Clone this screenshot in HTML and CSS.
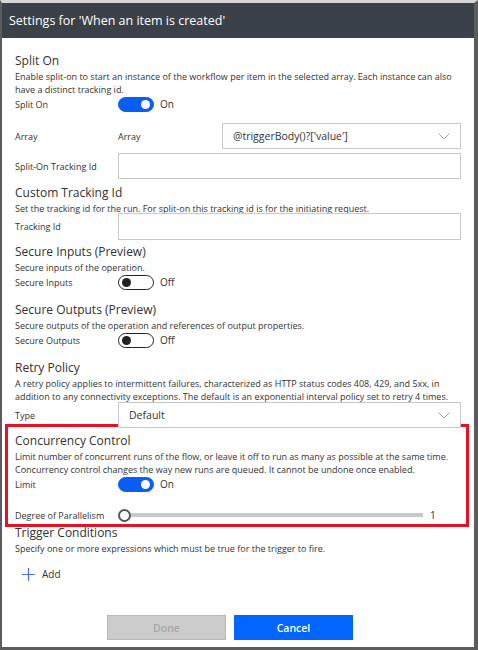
FILE: index.html
```html
<!DOCTYPE html>
<html lang="en">
<head>
  <meta charset="UTF-8" />
  <title>Settings</title>
  <link rel="stylesheet" href="styles.css">
</head>
<body>

  <div class="dialog">
    <div class="dialog-header">Settings for 'When an item is created'</div>

    <div class="dialog-body">
      <!-- Split On -->
      <section class="setting">
        <h3>Split On</h3>
        <p class="desc">Enable split-on to start an instance of the workflow per item in the selected array. Each instance can also have a distinct tracking id.</p>
        <div class="row row-toggle">
          <label>Split On</label>
          <div class="toggle-wrap">
            <span class="toggle on"><span class="knob"></span></span>
            <span class="toggle-text">On</span>
          </div>
        </div>
        <div class="row row-array">
          <label>Array</label>
          <span class="sub-label">Array</span>
          <div class="select">
            <span>@triggerBody()?['value']</span>
            <svg class="chevron" width="12" height="7" viewBox="0 0 12 7"><path d="M0.5 0.5 L6 6 L11.5 0.5" fill="none" stroke="#a6a6a6" stroke-width="1"/></svg>
          </div>
        </div>
        <div class="row row-input">
          <label>Split-On Tracking Id</label>
          <div class="input"></div>
        </div>
      </section>

      <!-- Custom Tracking Id -->
      <section class="setting">
        <h3>Custom Tracking Id</h3>
        <p class="desc">Set the tracking id for the run. For split-on this tracking id is for the initiating request.</p>
        <div class="row row-input row-tight">
          <label>Tracking Id</label>
          <div class="input"></div>
        </div>
      </section>

      <!-- Secure Inputs -->
      <section class="setting">
        <h3>Secure Inputs (Preview)</h3>
        <p class="desc">Secure inputs of the operation.</p>
        <div class="row row-toggle">
          <label>Secure Inputs</label>
          <div class="toggle-wrap">
            <span class="toggle"><span class="knob"></span></span>
            <span class="toggle-text">Off</span>
          </div>
        </div>
      </section>

      <!-- Secure Outputs -->
      <section class="setting">
        <h3>Secure Outputs (Preview)</h3>
        <p class="desc">Secure outputs of the operation and references of output properties.</p>
        <div class="row row-toggle">
          <label>Secure Outputs</label>
          <div class="toggle-wrap">
            <span class="toggle"><span class="knob"></span></span>
            <span class="toggle-text">Off</span>
          </div>
        </div>
      </section>

      <!-- Retry Policy -->
      <section class="setting">
        <h3>Retry Policy</h3>
        <p class="desc">A retry policy applies to intermittent failures, characterized as HTTP status codes 408, 429, and 5xx, in addition to any connectivity exceptions. The default is an exponential interval policy set to retry 4 times.</p>
        <div class="row row-type">
          <label>Type</label>
          <div class="select">
            <span>Default</span>
            <svg class="chevron" width="12" height="7" viewBox="0 0 12 7"><path d="M0.5 0.5 L6 6 L11.5 0.5" fill="none" stroke="#a6a6a6" stroke-width="1"/></svg>
          </div>
        </div>
      </section>

      <!-- Concurrency Control (highlighted) -->
      <section class="setting highlight">
        <h3>Concurrency Control</h3>
        <p class="desc">Limit number of concurrent runs of the flow, or leave it off to run as many as possible at the same time. Concurrency control changes the way new runs are queued. It cannot be undone once enabled.</p>
        <div class="row row-toggle">
          <label>Limit</label>
          <div class="toggle-wrap">
            <span class="toggle on"><span class="knob"></span></span>
            <span class="toggle-text">On</span>
          </div>
        </div>
        <div class="row row-slider">
          <label>Degree of Parallelism</label>
          <div class="slider">
            <span class="thumb"></span>
            <span class="track"></span>
            <span class="slider-value">1</span>
          </div>
        </div>
      </section>

      <!-- Trigger Conditions -->
      <section class="setting">
        <h3>Trigger Conditions</h3>
        <p class="desc">Specify one or more expressions which must be true for the trigger to fire.</p>
        <div class="add-link">
          <svg width="13" height="13" viewBox="0 0 13 13"><path d="M6.5 0 V13 M0 6.5 H13" stroke="#4f6bed" stroke-width="1.2"/></svg>
          <span>Add</span>
        </div>
      </section>
    </div>

    <div class="dialog-footer">
      <button class="btn btn-done" disabled>Done</button>
      <button class="btn btn-cancel">Cancel</button>
    </div>
  </div>

</body>
</html>
```

FILE: styles.css
```css
/* Page */
body {
  margin: 0;
  padding: 0;
  background: #fff;
  font-family: "Open Sans", "Noto Sans", sans-serif;
  color: #333;
}

/* Dialog frame */
.dialog {
  width: 478px;
  height: 650px;
  box-sizing: border-box;
  border-top: 3px solid #d6d6d6;
  border-left: 2px solid #5c5c5c;
  border-right: 4px solid #5c5c5c;
  border-bottom: 3px solid #5c5c5c;
  display: flex;
  flex-direction: column;
  background: #fff;
}

.dialog-header {
  height: 35px;
  background: #3b4148;
  color: #fff;
  font-size: 12.5px;
  line-height: 35px;
  padding-left: 7px;
  flex-shrink: 0;
}

.dialog-body {
  padding: 14px 13px 0 13px;
  flex: 1;
}

/* Sections */
.setting {
  display: flex;
  flex-direction: column;
}

.setting h3 {
  margin: 0;
  font-size: 12px;
  font-weight: normal;
  line-height: 18px;
  color: #323130;
}

.setting .desc {
  margin: 0;
  font-size: 9px;
  line-height: 13px;
  color: #333;
}

.setting + .setting {
  margin-top: 3px;
}

/* Rows */
.row {
  display: grid;
  grid-template-columns: 103px 1fr;
  align-items: center;
  font-size: 9px;
}

.row label {
  color: #333;
}

.row-toggle {
  height: 16px;
  margin-bottom: 8px;
}

.row-array {
  grid-template-columns: 103px 104px 1fr;
  height: 26px;
  margin-top: 3px;
}

.row-input {
  height: 26px;
  margin: 4px 0 2px;
}

.row-tight {
  height: 27px;
  margin: -2px 0 0;
}

.row-type {
  height: 26px;
  margin-top: -1px;
}

/* Inputs */
.input,
.select {
  height: 100%;
  box-sizing: border-box;
  border: 1px solid #c8c8c8;
  background: #fff;
}

.select {
  display: flex;
  align-items: center;
  justify-content: space-between;
  padding: 0 10px 0 10px;
  font-size: 10.5px;
  color: #333;
}

.chevron {
  flex-shrink: 0;
}

/* Toggles */
.toggle-wrap {
  display: flex;
  align-items: center;
}

.toggle {
  width: 36px;
  height: 15px;
  box-sizing: border-box;
  border-radius: 8px;
  border: 1.5px solid #222;
  background: #fff;
  display: flex;
  align-items: center;
  padding: 0 3px;
}

.toggle .knob {
  width: 9px;
  height: 9px;
  border-radius: 50%;
  background: #222;
}

.toggle.on {
  background: #0a5ef5;
  border-color: #0a5ef5;
  justify-content: flex-end;
}

.toggle.on .knob {
  background: #fff;
}

.toggle-text {
  margin-left: 6px;
  font-size: 10px;
}

/* Highlighted section */
.setting.highlight {
  margin: -4px -8px -6px -10px;
  padding: 5px 5px 1px 7px;
  border: 3px solid #e81123;
}

.highlight .row-toggle {
  margin-bottom: 0;
}

.row-slider {
  height: 16px;
  margin-top: 15px;
}

.slider {
  display: flex;
  align-items: center;
}

.slider .thumb {
  width: 13px;
  height: 13px;
  box-sizing: border-box;
  border-radius: 50%;
  border: 2px solid #555;
  background: #fff;
  flex-shrink: 0;
}

.slider .track {
  flex: 1;
  height: 4px;
  background: #c8c8c8;
  margin-right: 7px;
}

.slider .slider-value {
  font-size: 10px;
  width: 31px;
}

/* Add link */
.add-link {
  display: flex;
  align-items: center;
  gap: 7px;
  margin-top: 12px;
  padding-left: 7px;
  font-size: 10px;
  color: #333;
}

/* Footer buttons */
.dialog-footer {
  display: flex;
  justify-content: center;
  gap: 8px;
  padding: 0 16px 7px 0;
}

.btn {
  width: 119px;
  height: 25px;
  font-family: "Open Sans", "Noto Sans", sans-serif;
  font-size: 10.5px;
  font-weight: 600;
  border-radius: 0;
}

.btn-done {
  background: #cccccc;
  border: 1px solid #b8b8b8;
  color: #a6a6a6;
}

.btn-cancel {
  background: #0066ff;
  border: 1px solid #0066ff;
  color: #fff;
}
```
